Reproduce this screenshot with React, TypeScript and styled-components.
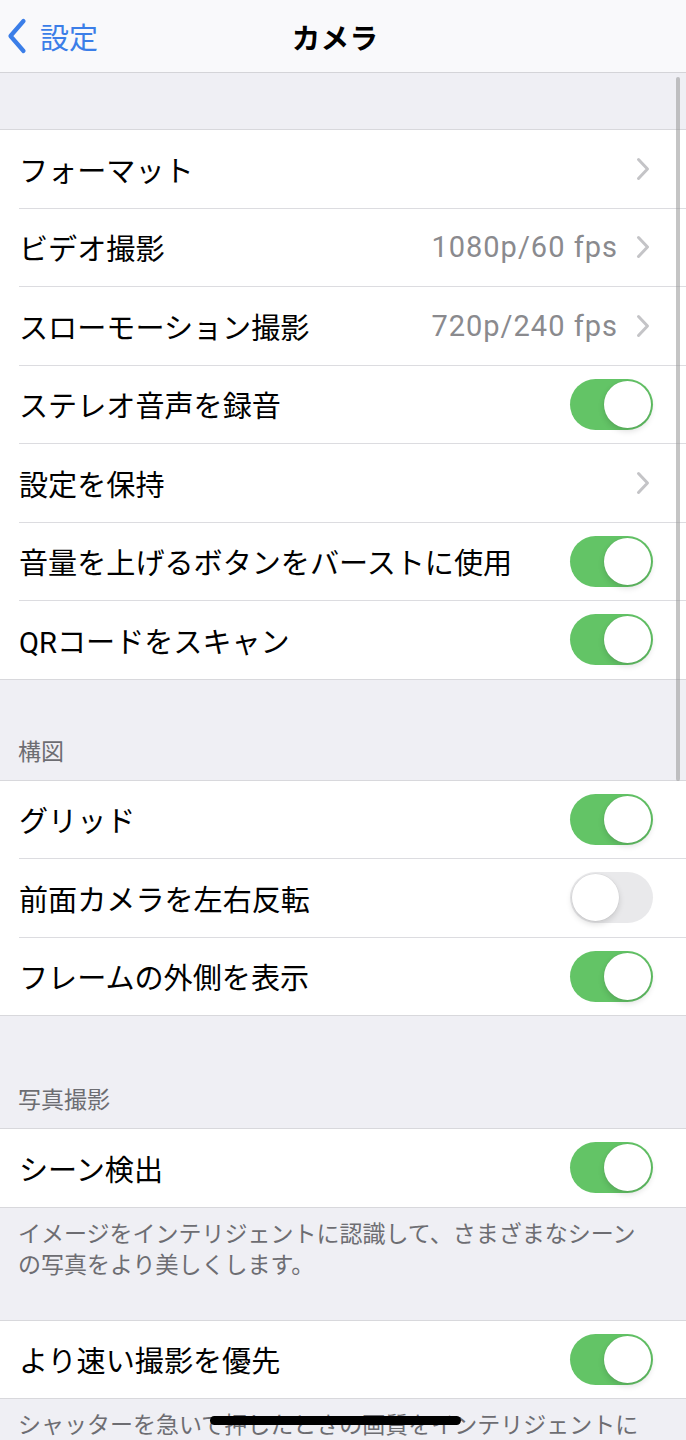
import React from "react";
import styled, { createGlobalStyle } from "styled-components";

const Global = createGlobalStyle`
  html, body {
    margin: 0;
    padding: 0;
    height: 1440px;
    overflow: hidden;
    background: #efeff4;
  }
  body {
    font-family: Roboto, "Noto Sans CJK JP", sans-serif;
    -webkit-font-smoothing: antialiased;
  }
`;

const Screen = styled.div`
  position: relative;
  width: 686px;
  height: 1440px;
  overflow: hidden;
  background: #efeff4;
`;

const NavBar = styled.header`
  position: relative;
  height: 72px;
  background: #f9f9fb;
  border-bottom: 1px solid #d4d4d8;
  display: flex;
  align-items: center;
  justify-content: center;
`;

const BackButton = styled.div`
  position: absolute;
  left: 7px;
  top: 0;
  bottom: 0;
  display: flex;
  align-items: center;
  gap: 13px;
  color: #3b7ee8;
  font-size: 29px;
`;

const Title = styled.h1`
  margin: 0 16px 0 0;
  font-size: 28.5px;
  font-weight: 700;
  color: #000;
  letter-spacing: 0.3px;
`;

const Spacer = styled.div<{ $h: number }>`
  height: ${(p) => p.$h}px;
`;

const Group = styled.section`
  background: #fff;
  border-top: 1px solid #d8d8dc;
  border-bottom: 1px solid #d8d8dc;
`;

const Row = styled.div`
  position: relative;
  height: 77.5px;
  display: flex;
  align-items: center;
  padding: 0 33px 0 19px;
  & + & {
    margin-top: 1px;
  }
  & + &::before {
    content: "";
    position: absolute;
    left: 19px;
    right: 0;
    top: -1px;
    height: 1px;
    background: #dcdce0;
  }
`;

const Label = styled.span`
  flex: 1;
  font-size: 29.1px;
  color: #000;
  white-space: nowrap;
`;

const Value = styled.span`
  font-size: 29px;
  color: #8a8a8e;
  letter-spacing: 1px;
  margin-right: 18px;
`;

const Track = styled.div<{ $on: boolean }>`
  position: relative;
  width: 83px;
  height: 51px;
  border-radius: 26px;
  background: ${(p) => (p.$on ? "#63c466" : "#e9e9eb")};
  flex-shrink: 0;
`;

const Knob = styled.div<{ $on: boolean }>`
  position: absolute;
  top: 2px;
  left: ${(p) => (p.$on ? "34px" : "2px")};
  width: 47px;
  height: 47px;
  border-radius: 50%;
  background: #fff;
  box-shadow: 0 3px 6px rgba(0, 0, 0, 0.14), 0 0 0 0.5px rgba(0, 0, 0, 0.06);
`;

const SectionHeader = styled.div<{ $top: number }>`
  padding: ${(p) => p.$top}px 18px 13px;
  font-size: 23px;
  line-height: 28px;
  color: #6d6d72;
`;

const Footer = styled.div<{ $bottom: number }>`
  padding: 11px 40px ${(p) => p.$bottom}px 18px;
  font-size: 23px;
  line-height: 31px;
  color: #6d6d72;
`;

const ScrollIndicator = styled.div`
  position: absolute;
  left: 676px;
  top: 77px;
  width: 4px;
  height: 704px;
  border-radius: 2px;
  background: rgba(150, 150, 150, 0.55);
`;

const HomeIndicator = styled.div`
  position: absolute;
  left: 210px;
  bottom: 15px;
  width: 251px;
  height: 9px;
  border-radius: 5px;
  background: #000;
`;

const Chevron = () => (
  <svg width="14" height="24" viewBox="0 0 14 24" style={{ flexShrink: 0, marginRight: 3 }}>
    <path d="M2.5 2.5 L11.5 12 L2.5 21.5" fill="none" stroke="#c4c4c7" strokeWidth="3" strokeLinecap="round" strokeLinejoin="round" />
  </svg>
);

const BackChevron = () => (
  <svg width="20" height="36" viewBox="0 0 20 36">
    <path d="M16.5 3 L3.5 18 L16.5 33" fill="none" stroke="#3b7ee8" strokeWidth="4.2" strokeLinecap="round" strokeLinejoin="round" />
  </svg>
);

type Item = { label: string; value?: string; toggle?: boolean; on?: boolean };

const Toggle = ({ on }: { on: boolean }) => (
  <Track $on={on}>
    <Knob $on={on} />
  </Track>
);

const RowItem = ({ item }: { item: Item }) => (
  <Row>
    <Label>{item.label}</Label>
    {item.value && <Value>{item.value}</Value>}
    {item.toggle ? <Toggle on={!!item.on} /> : <Chevron />}
  </Row>
);

const group1: Item[] = [
  { label: "フォーマット" },
  { label: "ビデオ撮影", value: "1080p/60 fps" },
  { label: "スローモーション撮影", value: "720p/240 fps" },
  { label: "ステレオ音声を録音", toggle: true, on: true },
  { label: "設定を保持" },
  { label: "音量を上げるボタンをバーストに使用", toggle: true, on: true },
  { label: "QRコードをスキャン", toggle: true, on: true },
];

const group2: Item[] = [
  { label: "グリッド", toggle: true, on: true },
  { label: "前面カメラを左右反転", toggle: true, on: false },
  { label: "フレームの外側を表示", toggle: true, on: true },
];

export default function App() {
  return (
    <Screen>
      <Global />
      <NavBar>
        <BackButton>
          <BackChevron />
          <span>設定</span>
        </BackButton>
        <Title>カメラ</Title>
      </NavBar>
      <Spacer $h={56} />
      <Group>
        {group1.map((it) => (
          <RowItem key={it.label} item={it} />
        ))}
      </Group>
      <SectionHeader $top={59}>構図</SectionHeader>
      <Group>
        {group2.map((it) => (
          <RowItem key={it.label} item={it} />
        ))}
      </Group>
      <SectionHeader $top={71}>写真撮影</SectionHeader>
      <Group>
        <RowItem item={{ label: "シーン検出", toggle: true, on: true }} />
      </Group>
      <Footer $bottom={39}>
        イメージをインテリジェントに認識して、さまざまなシーンの写真をより美しくします。
      </Footer>
      <Group>
        <RowItem item={{ label: "より速い撮影を優先", toggle: true, on: true }} />
      </Group>
      <Footer $bottom={30}>
        シャッターを急いで押したときの画質をインテリジェントに調整して、より多くの写真を撮影できるようにします。
      </Footer>
      <ScrollIndicator />
      <HomeIndicator />
    </Screen>
  );
}
